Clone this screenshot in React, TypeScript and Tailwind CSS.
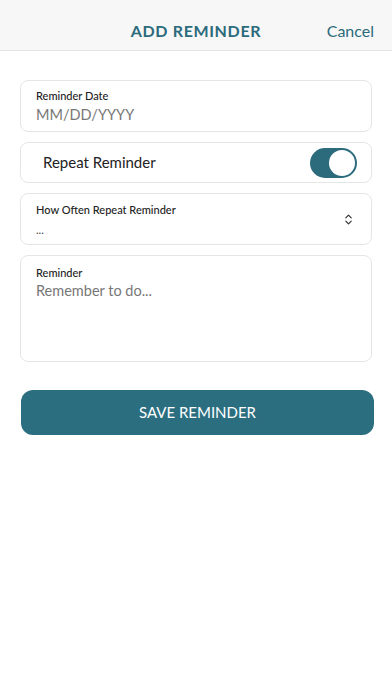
import { ChevronsUpDown } from "lucide-react"

const font = { fontFamily: "Lato, 'Open Sans', sans-serif" }

export default function App() {
  return (
    <div className="min-h-[696px] w-full bg-white" style={font}>
      {/* header */}
      <header className="relative flex h-[51px] items-center justify-center border-b border-[#e4e4e4] bg-[#f7f7f7] pt-[12px]">
        <h1 className="text-[16px] font-bold tracking-[0.04em] text-[#2b6b7c]">ADD REMINDER</h1>
        <button className="absolute right-[18px] top-[21px] text-[16px] leading-[20px] text-[#2b6b7c]">Cancel</button>
      </header>

      <div className="flex flex-col gap-[10px] px-[20px] pt-[29px]">
        <div className="flex h-[52px] flex-col justify-center rounded-[8px] border border-[#e6e6e6] pl-[15px]">
          <span className="text-[11px] font-medium leading-[15px] text-[#222]">Reminder Date</span>
          <span className="mt-[2px] text-[14.5px] leading-[20px] text-[#777]">MM/DD/YYYY</span>
        </div>

        <div className="flex h-[41px] items-center justify-between rounded-[8px] border border-[#e6e6e6] pl-[22px] pr-[14px]">
          <span className="text-[15px] text-[#222]">Repeat Reminder</span>
          <div className="flex h-[30px] w-[47px] items-center justify-end rounded-full bg-[#2b6b7c] pr-[2px]">
            <div className="h-[26px] w-[26px] rounded-full bg-white" />
          </div>
        </div>

        <div className="flex h-[52px] items-center justify-between rounded-[8px] border border-[#e6e6e6] pl-[15px] pr-[16px]">
          <div className="flex flex-col">
            <span className="text-[11px] font-medium leading-[15px] text-[#222]">How Often Repeat Reminder</span>
            <span className="mt-[5px] text-[11px] leading-[15px] text-[#444]">...</span>
          </div>
          <ChevronsUpDown className="h-[13px] w-[13px] text-[#333]" strokeWidth={2.2} />
        </div>

        <div className="flex h-[107px] flex-col rounded-[8px] border border-[#e6e6e6] pl-[15px] pt-[9px]">
          <span className="text-[11px] font-medium leading-[15px] text-[#222]">Reminder</span>
          <span className="mt-[1px] text-[14.5px] leading-[20px] text-[#777]">Remember to do...</span>
        </div>

        <button className="ml-[1px] mr-[-2px] mt-[18px] flex h-[45px] items-center justify-center rounded-[12px] bg-[#2b6e7f] text-[15px] text-white">
          SAVE REMINDER
        </button>
      </div>
    </div>
  )
}
